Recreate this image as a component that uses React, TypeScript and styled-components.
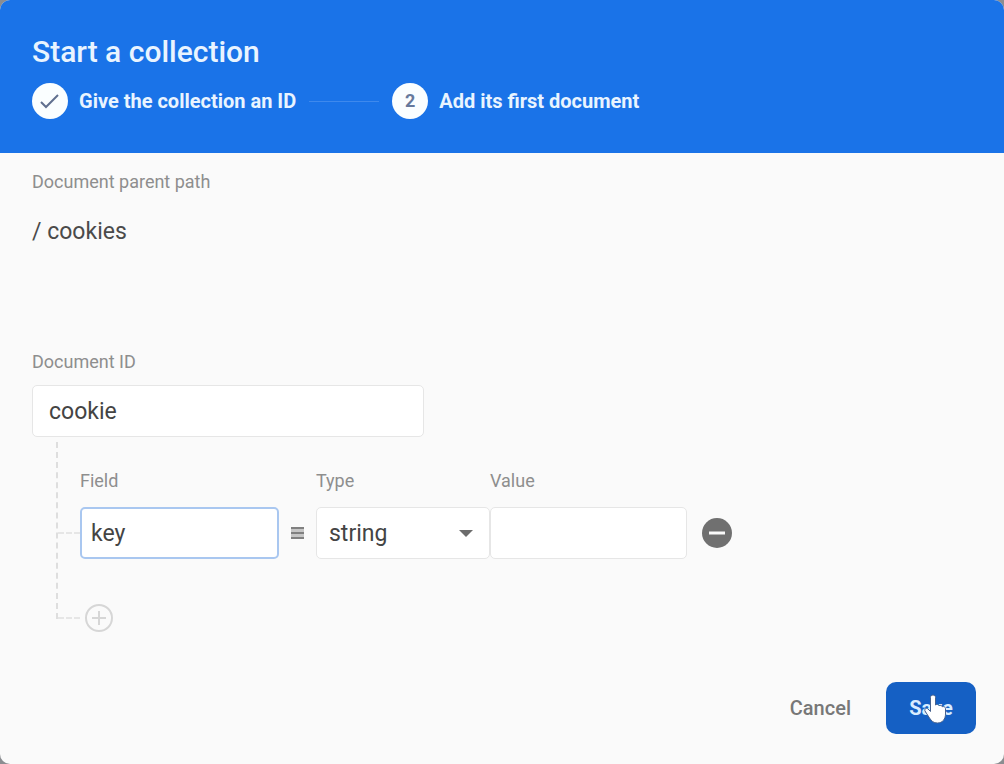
import React, { useState } from "react";
import styled, { createGlobalStyle } from "styled-components";

const GlobalStyle = createGlobalStyle`
  *, *::before, *::after { box-sizing: border-box; }
  body {
    margin: 0;
    background: #8b8d91;
    font-family: Roboto, "Liberation Sans", sans-serif;
  }
  button, input, select { font: inherit; color: inherit; }
`;

const Dialog = styled.main`
  display: flex;
  flex-direction: column;
  min-height: 100vh;
  border-radius: 10px;
  overflow: hidden;
  background: #fafafa;
  color: #4a4a4a;
`;

const Header = styled.header`
  padding: 36px 32px 34px;
  background: #1a73e8;
  color: #e9f4ff;
`;

const Title = styled.h1`
  margin: 0 0 15px;
  font-size: 30px;
  line-height: 32px;
  font-weight: 500;
`;

const Steps = styled.ol`
  display: flex;
  align-items: center;
  gap: 13px;
  margin: 0;
  padding: 0;
  list-style: none;
`;

const Step = styled.li`
  display: flex;
  align-items: center;
  gap: 11px;
  font-size: 20px;
  line-height: 24px;
  font-weight: 700;
`;

const StepBadge = styled.span`
  display: flex;
  align-items: center;
  justify-content: center;
  width: 36px;
  height: 36px;
  border-radius: 50%;
  background: #fafeff;
  color: #66799c;
  font-size: 18px;
`;

const StepLine = styled.li`
  width: 70px;
  height: 1px;
  background: #3e89ed;
`;

const Form = styled.form`
  display: flex;
  flex: 1;
  flex-direction: column;
  padding: 17px 28px 30px 32px;
`;

const labelText = `
  font-size: 18px;
  line-height: 24px;
  color: #8e8e8e;
`;

const Caption = styled.p`
  margin: 0;
  ${labelText}
`;

const Label = styled.label`
  display: block;
  ${labelText}
`;

const Path = styled.p`
  margin: 24px 0 104px;
  font-size: 23px;
  line-height: 28px;
`;

const TextInput = styled.input<{ $pad: number; $focused?: boolean }>`
  display: block;
  width: 100%;
  height: 52px;
  padding: 0 ${(p) => p.$pad}px;
  border: ${(p) => (p.$focused ? "2px solid #a9c7f0" : "1px solid #e6e6e6")};
  border-radius: 5px;
  outline: none;
  background: #fff;
  font-size: 23px;
  color: #444;
`;

const DocumentId = styled.div`
  display: grid;
  gap: 11px;
  max-width: 392px;
`;

const Tree = styled.div`
  margin: 5px 0 0 24px;
  padding-top: 27px;
  border-left: 2px dashed #dedede;
`;

const Branch = styled.span`
  width: 22px;
  border-top: 2px dashed #e6e6e6;
`;

const FieldRow = styled.div`
  display: grid;
  grid-template-columns: 22px 199px 37px 174px 197px 60px;
  align-items: center;
  row-gap: 14px;

  > :not(label) { grid-row: 2; }
`;

const Cell = styled(Label)<{ $column: number }>`
  grid-row: 1;
  grid-column: ${(p) => p.$column};
`;

const EqualsMark = styled.svg`
  justify-self: center;
`;

const SelectBox = styled.div`
  display: grid;
  align-items: center;

  > * { grid-area: 1 / 1; }
`;

const Select = styled.select`
  appearance: none;
  width: 100%;
  height: 52px;
  padding: 0 12px;
  border: 1px solid #e6e6e6;
  border-radius: 5px;
  outline: none;
  background: #fff;
  font-size: 23px;
  color: #444;
`;

const Caret = styled.svg`
  justify-self: end;
  margin-right: 17px;
  pointer-events: none;
`;

const IconButton = styled.button`
  display: flex;
  justify-self: center;
  padding: 0;
  border: 0;
  background: none;
  cursor: pointer;
`;

const AddRow = styled.div`
  display: flex;
  align-items: center;
  gap: 4px;
  margin: 44px 0 -14px;
`;

const Actions = styled.footer`
  display: flex;
  align-items: center;
  justify-content: flex-end;
  gap: 19px;
  margin-top: auto;
  padding-top: 32px;
`;

const Button = styled.button<{ $primary?: boolean }>`
  position: relative;
  height: 52px;
  padding: 0 ${(p) => (p.$primary ? 0 : 16)}px;
  min-width: ${(p) => (p.$primary ? 90 : 0)}px;
  border: 0;
  border-radius: 10px;
  background: ${(p) => (p.$primary ? "#1560c4" : "transparent")};
  color: ${(p) => (p.$primary ? "#d8edff" : "#777")};
  font-size: 20px;
  font-weight: ${(p) => (p.$primary ? 700 : 500)};
  cursor: pointer;
`;

const Pointer = styled.svg`
  position: absolute;
  top: 11px;
  left: 36px;
  pointer-events: none;
`;

export default function App() {
  const [documentId, setDocumentId] = useState("cookie");
  const [field, setField] = useState("key");
  const [value, setValue] = useState("");

  return (
    <>
      <GlobalStyle />
      <Dialog>
        <Header>
          <Title>Start a collection</Title>
          <Steps>
            <Step>
              <StepBadge>
                <svg width="22" height="18" viewBox="0 0 22 18" fill="none" aria-hidden="true">
                  <path d="M2 10l5 5L19 3" stroke="#60708f" strokeWidth="2" />
                </svg>
              </StepBadge>
              Give the collection an ID
            </Step>
            <StepLine aria-hidden="true" />
            <Step aria-current="step">
              <StepBadge>2</StepBadge>
              Add its first document
            </Step>
          </Steps>
        </Header>

        <Form onSubmit={(e) => e.preventDefault()}>
          <Caption>Document parent path</Caption>
          <Path>/ cookies</Path>

          <DocumentId>
            <Label htmlFor="document-id">Document ID</Label>
            <TextInput
              id="document-id"
              $pad={16}
              value={documentId}
              onChange={(e) => setDocumentId(e.target.value)}
            />
          </DocumentId>

          <Tree>
            <FieldRow>
              <Cell htmlFor="field-name" $column={2}>Field</Cell>
              <Cell htmlFor="field-type" $column={4}>Type</Cell>
              <Cell htmlFor="field-value" $column={5}>Value</Cell>

              <Branch />
              <TextInput
                id="field-name"
                $pad={9}
                $focused
                value={field}
                onChange={(e) => setField(e.target.value)}
              />
              <EqualsMark width="13" height="12" viewBox="0 0 13 12" role="img" aria-label="equals">
                <rect width="13" height="12" fill="#c6c6c6" />
                <path d="M0 1h13M0 6h13M0 11h13" stroke="#808080" strokeWidth="2" />
              </EqualsMark>
              <SelectBox>
                <Select id="field-type" defaultValue="string">
                  <option>string</option>
                  <option>number</option>
                  <option>boolean</option>
                </Select>
                <Caret width="14" height="7" viewBox="0 0 14 7" aria-hidden="true">
                  <path d="M0 0h14L7 7z" fill="#6c6c6c" />
                </Caret>
              </SelectBox>
              <TextInput
                id="field-value"
                $pad={9}
                value={value}
                onChange={(e) => setValue(e.target.value)}
              />
              <IconButton type="button" aria-label="Remove field">
                <svg width="30" height="30" viewBox="0 0 30 30">
                  <circle cx="15" cy="15" r="15" fill="#707070" />
                  <path d="M7 15h16" stroke="#fafafa" strokeWidth="3" />
                </svg>
              </IconButton>
            </FieldRow>

            <AddRow>
              <Branch />
              <IconButton type="button" aria-label="Add field">
                <svg width="30" height="30" viewBox="0 0 30 30" fill="none" stroke="#d6d6d6" strokeWidth="2">
                  <circle cx="15" cy="15" r="13" />
                  <path d="M8 15h14M15 8v14" />
                </svg>
              </IconButton>
            </AddRow>
          </Tree>

          <Actions>
            <Button type="button">Cancel</Button>
            <Button type="submit" $primary>
              Save
              <Pointer width="28" height="31" viewBox="0 0 28 31" aria-hidden="true">
                <path
                  d="M11 2c1.600 0 2.500 1 2.500 2.500V12c.8-.9 3-.7 3.500.7 1.100-.7 2.900-.3 3.300 1 1.500-.5 3.200.3 3.200 2V21c0 5-3 9-8 9-4 0-6-2-8-5l-4.500-7c-1-2 1.500-3.500 3-2l2.500 2.500v-14C8.500 3 9.500 2 11 2z"
                  fill="#fff"
                  stroke="#46628f"
                  strokeWidth="1"
                />
              </Pointer>
            </Button>
          </Actions>
        </Form>
      </Dialog>
    </>
  );
}
